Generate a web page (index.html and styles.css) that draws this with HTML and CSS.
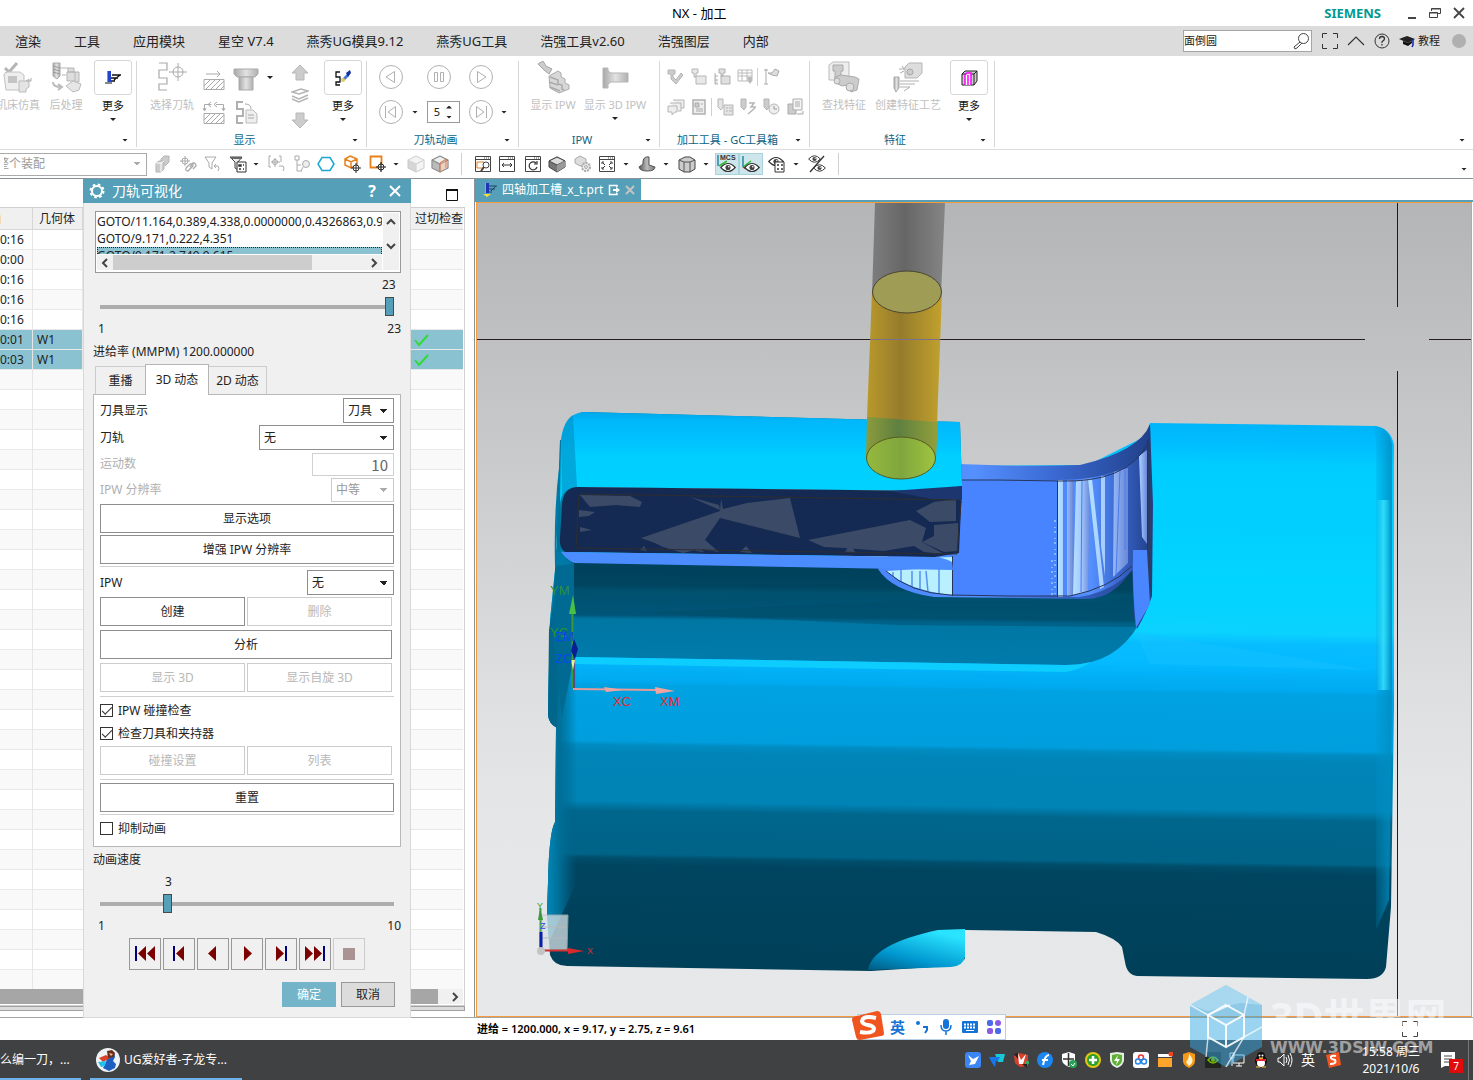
FILE: index.html
```html
<!DOCTYPE html>
<html lang="zh-CN">
<head>
<meta charset="utf-8">
<title>NX - 加工</title>
<link rel="stylesheet" href="styles.css">
</head>
<body>
<svg class="defs" aria-hidden="true">
  <defs>
    <linearGradient id="metal" x1="0" x2="1"><stop offset="0" stop-color="#a8a8a8"/><stop offset=".5" stop-color="#e2e2e2"/><stop offset="1" stop-color="#b0b0b0"/></linearGradient>
    <linearGradient id="dark" x1="0" x2="1"><stop offset="0" stop-color="#555"/><stop offset=".5" stop-color="#bbb"/><stop offset="1" stop-color="#777"/></linearGradient>
    <symbol id="i-eye" viewBox="0 0 20 12"><path d="M1 6q9-10 18 0q-9 10-18 0z" fill="#fff" stroke="#333" stroke-width="1.5"/><circle cx="10" cy="6" r="3.2" fill="#444"/><circle cx="11" cy="5" r="1" fill="#fff"/></symbol>
    <symbol id="i-cube" viewBox="0 0 18 18"><path d="M9 1l8 4v8l-8 4-8-4V5z" fill="#eee" stroke="currentColor" stroke-width="1.2" stroke-linejoin="round"/><path d="M1 5l8 4v8l-8-4z" fill="#999" fill-opacity=".6"/><path d="M1 5l8 4 8-4M9 9v8" fill="none" stroke="currentColor" stroke-width="1.2"/></symbol>
    <symbol id="i-window" viewBox="0 0 18 18"><path d="M1.500 1.500h15v15h-15zM1.500 4.500h15" fill="#fff" stroke="#444"/><path d="M10 3h1M12 3h1M14 3h1" stroke="#444"/></symbol>
    <symbol id="i-hatch" viewBox="0 0 22 11"><path d="M1 .5h20v10H1z" fill="none" stroke="#aaa"/><path d="M1 7l6-6M3 10l9-9M8 10l9-9M13 10l8-8M18 10l3-3" stroke="#aaa"/></symbol>
  </defs>
</svg>

<div class="app">
  <header class="titlebar">
    <h1>NX - 加工</h1>
    <div class="window-controls">
      <strong class="brand">SIEMENS</strong>
      <button aria-label="最小化"><svg width="12" height="14"><path d="M2 12h8" stroke="#444" stroke-width="2"/></svg></button>
      <button aria-label="还原"><svg width="14" height="14"><path d="M3.500 5V2.500h9v5H10M1.500 6.500h8v5h-8zM3 3h10M1 7h9" fill="none" stroke="#444"/></svg></button>
      <button aria-label="关闭"><svg width="14" height="14"><path d="M2 2l10 10M12 2L2 12" stroke="#444" stroke-width="1.800"/></svg></button>
    </div>
  </header>

  <nav class="menubar">
    <a href="#">渲染</a><a href="#">工具</a><a href="#">应用模块</a><a href="#">星空 V7.4</a><a href="#">燕秀UG模具9.12</a><a href="#">燕秀UG工具</a><a href="#">浩强工具v2.60</a><a href="#">浩强图层</a><a href="#">内部</a>
    <div class="menu-tools">
      <label class="search"><input type="text" value="面倒圆" aria-label="命令查找器"><svg width="18" height="18"><circle cx="11.500" cy="6.500" r="5" fill="none" stroke="#444"/><path d="M8 10l-6 5 1 2 2-1 5-5" fill="none" stroke="#444"/></svg></label>
      <button aria-label="全屏"><svg width="18" height="18"><path d="M1.500 6V1.500H6M12 1.500h4.500V6M16.500 12v4.500H12M6 16.500H1.500V12" fill="none" stroke="#333"/></svg></button>
      <button aria-label="折叠"><svg width="18" height="18"><path d="M1 13l8-8 8 8" fill="none" stroke="#333" stroke-width="1.200"/></svg></button>
      <button aria-label="帮助"><svg width="18" height="18"><circle cx="9" cy="9" r="7" fill="none" stroke="#333"/><path d="M6.500 7q0-2.500 2.500-2.500t2.500 2.300q0 1.400-1.500 2T9 11M9 12v1.500" fill="none" stroke="#333" stroke-width="1.300"/></svg></button>
      <a class="tutorial" href="#"><svg width="16" height="14"><path d="M0 5l8-3 8 3-7 4z" fill="#222"/><path d="M4 7v3l5 2 4-3V7l-4 2z" fill="#111"/><path d="M14 5v6l-1 2" fill="none" stroke="#12a" stroke-width="1.500"/></svg>教程</a>
      <span class="dot"></span>
    </div>
  </nav>

  <section class="ribbon" aria-label="功能区">
    <div class="group g-output">
      <div class="group-body">
        <button class="big" disabled><svg width="32" height="32"><path d="M3 7l4 4 8-9" fill="none" stroke="#b5b5b5" stroke-width="3"/><path d="M2 14q0-3 4-3h12l4 3v15H4z" fill="#eee" stroke="#c2c2c2"/><path d="M6 15h9v7H6z" fill="#c4c4c4"/><path d="M17 20h7l3-2v8l-3 2v3h-7z" fill="#e4e4e4" stroke="#bbb"/><path d="M24 20h5v-3" fill="none" stroke="#aaa"/></svg><span>机床仿真</span></button>
        <button class="big" disabled><svg width="32" height="32"><path d="M3 2h7v13l-3 3-4-3z" fill="url(#metal)" stroke="#aaa"/><path d="M3 5l7 2M3 8l7 2M3 11l7 2" stroke="#999"/><path d="M10 7h8M12 14h4M18 7h6v4h-6zM17 11h8v9h-8zM23 11h6v10h-4" fill="#ddd" stroke="#b5b5b5"/><path d="M16 25l7-5 8 3-2 6-6 2z" fill="#e6e6e6" stroke="#bbb"/><path d="M3 21q0 5 8 5M8 23l4 3-4 3" fill="none" stroke="#bbb" stroke-width="2"/></svg><span>后处理</span></button>
        <button class="big more"><i><svg width="18" height="18"><path d="M3 2h4v11H3z" fill="#24c"/><path d="M3 2h1v11H3z" fill="#88e"/><path d="M1 14h7" stroke="#888" stroke-width="2"/><path d="M8 6h9M7 9h7M7 12h4M16 6l-6 5" fill="none" stroke="#111" stroke-width="1.300"/></svg></i><span>更多</span><b class="caret"></b></button>
      </div>
      <footer><span></span><b class="caret"></b></footer>
    </div>
    <div class="group g-show">
      <div class="group-body">
        <button class="big wide" disabled><svg width="32" height="32"><path d="M3 2h8v7H3v8h8v6H3v6h8" fill="none" stroke="#aaa" stroke-width="1.200"/><circle cx="22" cy="11" r="5" fill="none" stroke="#aaa"/><path d="M22 2v18M13 11h18" stroke="#aaa"/></svg><span>选择刀轨</span></button>
        <div class="stack">
          <button disabled aria-label="确认"><svg width="24" height="24"><path d="M4 6h14M15 3l3 3-3 3" fill="none" stroke="#aaa"/><use href="#i-hatch" x="1" y="11" width="22" height="11"/></svg></button>
          <button disabled aria-label="编辑显示"><svg width="24" height="24"><path d="M2.500 9V3.500h7M14 3.500h7.500V9M9 1L6 3.500 9 6M15 1l-3 2.500L15 6M1 7l1.500 3L4 7M20 7l1.500 3L23 7" fill="none" stroke="#aaa"/><use href="#i-hatch" x="1" y="12" width="22" height="11"/></svg></button>
        </div>
        <div class="stack lead">
          <button disabled aria-label="刀具"><svg width="26" height="26"><path d="M1 2h24v5l-3 3H4L1 7z" fill="url(#metal)" stroke="#aaa"/><path d="M6 10h14v13H6z" fill="url(#metal)" stroke="#aaa"/></svg></button>
          <button disabled aria-label="报告"><svg width="26" height="26"><path d="M10 2H4v7h6v7H4v7h6" fill="none" stroke="#b0b0b0" stroke-width="2"/><path d="M13 10h7l4 4v9H13z" fill="#eee" stroke="#bbb"/><path d="M15 15h6M15 18h6M12 4q6 0 6 5" fill="none" stroke="#aaa"/></svg></button>
        </div>
        <b class="caret first-row"></b>
        <div class="stack thirds">
          <button disabled aria-label="上移"><svg width="18" height="18"><path d="M9 1l8 8h-4v7H5V9H1z" fill="#ccc" stroke="#b8b8b8"/></svg></button>
          <button disabled aria-label="图层"><svg width="18" height="18"><path d="M1 5l9-3 7 2-9 3zM1 9l7 3 9-4M1 12l7 3 9-4" fill="none" stroke="#b5b5b5" stroke-width="1.400"/></svg></button>
          <button disabled aria-label="下移"><svg width="18" height="18"><path d="M9 17l8-8h-4V2H5v7H1z" fill="#ccc" stroke="#b8b8b8"/></svg></button>
        </div>
        <button class="big more"><i><svg width="18" height="18"><path d="M6 3H2v5h4v5H2v3h4" fill="none" stroke="#111" stroke-width="1.300"/><path d="M8 10l5-5 2 2-5 5z" fill="#47d"/><path d="M12 4l4-3 1 3-3 4z" fill="#139"/><circle cx="9" cy="11" r="2" fill="#dc6"/></svg></i><span>更多</span><b class="caret"></b></button>
      </div>
      <footer><span>显示</span><b class="caret"></b></footer>
    </div>
    <div class="group g-anim">
      <div class="group-body player">
        <button disabled aria-label="后退"><svg width="24" height="24"><circle cx="12" cy="12" r="11.500"/><path d="M15.500 6.500v11L7 12z"/></svg></button><span></span>
        <button disabled aria-label="暂停"><svg width="24" height="24"><circle cx="12" cy="12" r="11.500"/><path d="M7.500 7.500h3v9h-3zM13.500 7.500h3v9h-3z"/></svg></button>
        <button disabled aria-label="播放"><svg width="24" height="24"><circle cx="12" cy="12" r="11.500"/><path d="M8.500 6.500v11L17 12z"/></svg></button><span></span>
        <button disabled aria-label="上一步"><svg width="24" height="24"><circle cx="12" cy="12" r="11.500"/><path d="M16.500 6.500v11L9 12zM6.500 6v12"/></svg></button><b class="caret"></b>
        <label class="spin"><input type="text" value="5" aria-label="动画速度"><span><b class="caret up"></b><b class="caret"></b></span></label>
        <button disabled aria-label="下一步"><svg width="24" height="24"><circle cx="12" cy="12" r="11.500"/><path d="M7.500 6.500v11L15 12zM17.500 6v12"/></svg></button><b class="caret"></b>
      </div>
      <footer><span>刀轨动画</span><b class="caret"></b></footer>
    </div>
    <div class="group g-ipw">
      <div class="group-body">
        <button class="big wide" disabled><svg width="34" height="32"><path d="M2 3l5-3 3 5 6 3-3 5-5-4z" fill="#ccc" stroke="#a5a5a5"/><path d="M13 15l9-5 3 2v4l4 2v4l4 2v4l-10 4-9-5z" fill="#d8d8d8" stroke="#aaa"/><path d="M14 16l8 3v4l4 1v4l2 1M13 21l9 3M14 26l10 4" fill="none" stroke="#aaa" stroke-width="1.500"/></svg><span>显示 IPW</span></button>
        <button class="big wide" disabled><svg width="34" height="32"><path d="M5 7h5v3l3 2h17v9H13l-3 2v4H5z" fill="url(#metal)" stroke="#b5b5b5"/></svg><span>显示 3D IPW</span><b class="caret"></b></button>
      </div>
      <footer><span>IPW</span><b class="caret"></b></footer>
    </div>
    <div class="group g-gc">
      <div class="group-body rows">
        <div class="row">
          <button disabled aria-label="检查"><svg width="18" height="18"><path d="M1 2h7v4H6v3l3 3 5-7 2 2-7 9-5-5V6H1z" fill="#ccc" stroke="#b5b5b5"/></svg></button>
          <button disabled aria-label="文件夹"><svg width="18" height="18"><path d="M2 1h6v4H6v4H4V5H2zM6 8h10v8H6z" fill="#e8e8e8" stroke="#b5b5b5"/></svg></button>
          <button disabled aria-label="结构"><svg width="18" height="18"><path d="M6 1h6v4h-2v3H8V5H6zM8 8h9v8H8zM2 5v11h3M2 8h3M2 12h3" fill="#e0e0e0" stroke="#b0b0b0"/></svg></button>
          <button disabled aria-label="表格"><svg width="18" height="18"><path d="M2 2h14v11H2zM2 5h14M2 8h14M6 2v11M11 2v11" fill="none" stroke="#bbb"/><path d="M11 9h5v4l-2 3-2-3z" fill="#bbb"/></svg></button>
          <s></s>
          <button disabled aria-label="标记"><svg width="18" height="18"><path d="M3 1v15M1 2h4M1 16h4M5 5h4l3-4 4 2-2 5-5-1z" fill="#ddd" stroke="#aaa"/></svg></button>
        </div>
        <div class="row">
          <button disabled aria-label="窗口"><svg width="18" height="18"><path d="M6 2h11v8h-3M3 5h11v8h-3M1 8h9v6H8l-3 3v-3H1z" fill="#eee" stroke="#b5b5b5"/></svg></button>
          <button disabled aria-label="文档"><svg width="18" height="18"><path d="M3 2h12v14H3z" fill="#eee" stroke="#b0b0b0" stroke-width="1.500"/><path d="M5 5h4v4H5zM11 6h2M6 11h7M6 13h7" fill="#ccc" stroke="#aaa"/></svg></button>
          <s></s>
          <button disabled aria-label="列表"><svg width="18" height="18"><path d="M1 1h5v8l-2 3-3-3zM7 7h9v10H7zM9 10h2M12 10h3M9 13h2M12 13h3" fill="#e4e4e4" stroke="#b5b5b5"/></svg></button>
          <button disabled aria-label="修复"><svg width="18" height="18"><path d="M1 1h5v8l-2 3-3-3z" fill="#ccc" stroke="#b5b5b5"/><path d="M9 5h5l-3 4h5M8 16l7-6" fill="none" stroke="#b5b5b5" stroke-width="1.500"/></svg></button>
          <button disabled aria-label="时间"><svg width="18" height="18"><path d="M1 1h5v8l-2 3-3-3z" fill="#ccc" stroke="#b5b5b5"/><circle cx="11" cy="11" r="5" fill="#eee" stroke="#b5b5b5"/><path d="M11 8v3h3" fill="none" stroke="#999"/></svg></button>
          <button disabled aria-label="清单"><svg width="18" height="18"><path d="M2 6h8v10H2z" fill="#ccc" stroke="#aaa"/><path d="M7 1h9v11H7zM9 4h5M9 6h5M9 8h5M11 16h6v-3" fill="#f4f4f4" stroke="#aaa"/></svg></button>
        </div>
      </div>
      <footer><span>加工工具 - GC工具箱</span><b class="caret"></b></footer>
    </div>
    <div class="group g-feature">
      <div class="group-body">
        <button class="big" disabled><svg width="34" height="32"><path d="M2 4l4-3h16v14l-4 4H2z" fill="#eee" stroke="#bbb"/><path d="M6 4h10v6h-2v8H8v-8H6z" fill="#ccc" stroke="#aaa"/><path d="M8 16l6-2 14 2 4 2-2 11-6 2-4-7-5 1-6-3z" fill="#ccc" stroke="#aaa"/><circle cx="23" cy="26" r="4" fill="#ddd" stroke="#aaa"/><circle cx="10" cy="20" r="3" fill="#ddd" stroke="#aaa"/></svg><span>查找特征</span></button>
        <button class="big xwide" disabled><svg width="34" height="32"><path d="M14 6l4-4h13v10l-5 5H14z" fill="#ddd" stroke="#b5b5b5"/><circle cx="19" cy="11" r="3" fill="#ccc" stroke="#aaa"/><path d="M8 8h6M11 5l2 3M9 12l4-2" stroke="#aaa"/><path d="M3 16h5v11l-3 4-2-4z" fill="url(#metal)" stroke="#aaa"/><path d="M9 20h19M9 23h15M9 26h10l-6 4" fill="none" stroke="#b0b0b0"/></svg><span>创建特征工艺</span></button>
        <button class="big more"><i><svg width="18" height="18"><path d="M2 5l3-3h12v10l-3 4H2z" fill="#ccc" stroke="#222"/><path d="M2 5h12v11M14 5l3-3" fill="none" stroke="#222"/><path d="M5 16V6l2-2h4v12M8 6v10" fill="#fff" stroke="#f0f" stroke-width="1.500"/></svg></i><span>更多</span><b class="caret"></b></button>
      </div>
      <footer><span>特征</span><b class="caret"></b></footer>
    </div>
    <div class="group g-rest"><footer><span></span><b class="caret"></b></footer></div>
  </section>

  <section class="selbar" aria-label="选择条">
    <select disabled aria-label="选择范围"><option>整个装配</option></select>
    <div class="tools tight">
      <div><button disabled aria-label="组件"><svg width="18" height="18"><path d="M3 8l3-2h5v8l-3 3H3zM8 6V4l3-3h5v6l-4 4" fill="#ccc" stroke="#b5b5b5"/><path d="M3 8h5v9M8 8l3-2" fill="none" stroke="#fff"/></svg></button></div>
      <div><button disabled aria-label="关联"><svg width="18" height="18"><path d="M6 1v10M1 6h10" stroke="#aaa"/><circle cx="6" cy="6" r="3" fill="none" stroke="#aaa"/><path d="M7 13l4-4q3-1 3 2l-5 5q-3 0-2-3zM11 12l3-4q3 0 3 3l-3 3" fill="none" stroke="#aaa" stroke-width="1.300"/></svg></button><button disabled aria-label="重置过滤器"><svg width="18" height="18"><path d="M2 2h11L9 8v6l-3-2V8z" fill="none" stroke="#aaa"/><path d="M11 11h4q2 2 0 5M13 9l-2 2 2 2" fill="none" stroke="#aaa"/></svg></button></div>
      <div><button aria-label="过滤器"><svg width="18" height="18"><path d="M1 2h12L9 7v8l-3-2V7z" fill="#eee" stroke="#444"/><path d="M1 2h12v2H2z" fill="#666"/><path d="M8 7h9v10H8z" fill="#fff" stroke="#333"/><path d="M10 10h2v1h-2zM10 14h2M14 10h1M14 14h1" stroke="#333" stroke-width="1.500"/></svg></button><b class="caret"></b></div>
      <div><button disabled aria-label="捕捉"><svg width="18" height="18"><path d="M4 1H2v11h2M12 1h2v6M8 3v9M4 7h9" fill="none" stroke="#aaa"/><circle cx="8" cy="7" r="2.500" fill="none" stroke="#aaa"/><path d="M12 11h4q2 2 0 5" fill="none" stroke="#aaa"/></svg></button></div>
      <div><button disabled aria-label="结构"><svg width="18" height="18"><path d="M2 1h4v4H2zM4 5v11h5M4 10h4" fill="none" stroke="#aaa"/><circle cx="13" cy="9" r="3.500" fill="#eee" stroke="#aaa"/><path d="M10 12l-2 4" stroke="#aaa"/></svg></button><button aria-label="多边形"><svg width="18" height="18"><path d="M5 2.500h8l4 6.500-4 6.500H5L1 9z" fill="none" stroke="#1aa7d4" stroke-width="1.500"/></svg></button></div>
      <div><button aria-label="选择体"><svg width="18" height="18"><path d="M7 1l7 3v6l-6 3-6-3V4zM2 4l6 3 6-3M8 7v6" fill="none" stroke="#e8811a" stroke-width="1.500"/><circle cx="13" cy="13" r="3" fill="#fff" stroke="#333"/><path d="M13 8v10M8 13h10" stroke="#333"/></svg></button></div>
      <div><button aria-label="矩形选择"><svg width="18" height="18"><path d="M1.500 1.500h11v11h-11z" fill="none" stroke="#e8811a" stroke-width="1.800"/><circle cx="12" cy="12" r="3" fill="#fff" stroke="#222"/><path d="M12 7v10M7 12h10" stroke="#222" stroke-width="1.200"/></svg></button><b class="caret"></b></div>
      <div><button disabled aria-label="立方体" class="faint"><svg width="18" height="18"><use href="#i-cube" width="18" height="18"/></svg></button><button aria-label="着色"><svg width="18" height="18" color="#888"><use href="#i-cube" width="18" height="18"/><path d="M9 17V8l6-4v9" fill="#e8b49a" fill-opacity=".5" stroke="#d87848"/></svg></button></div>
    </div>
    <s></s>
    <div class="tools">
      <div><button aria-label="窗口缩放"><svg width="18" height="18"><use href="#i-window" width="18" height="18"/><path d="M3 7h7v6H3z" fill="none" stroke="#e8811a"/><circle cx="12" cy="10" r="3" fill="#fff" stroke="#444"/><path d="M10 12l-3 4" stroke="#444" stroke-width="2"/></svg></button><button aria-label="平移"><svg width="18" height="18"><use href="#i-window" width="18" height="18"/><path d="M4 10h10M6 8l-2 2 2 2M12 8l2 2-2 2" fill="none" stroke="#333"/></svg></button></div>
      <div><button aria-label="旋转"><svg width="18" height="18"><use href="#i-window" width="18" height="18"/><path d="M12 8a4 4 0 1 0 1 4M13 6v3h-3" fill="none" stroke="#333" stroke-width="1.200"/></svg></button><button aria-label="视图"><svg width="18" height="18"><path d="M9 2l8 4v6l-8 5-8-5V6z" fill="#777" stroke="#444"/><path d="M9 2l8 4-8 4-8-4z" fill="#ddd" stroke="#444"/><path d="M9 10v7l8-5V6z" fill="#999"/></svg></button></div>
      <div><button disabled aria-label="设置"><svg width="18" height="18"><path d="M6 1l6 3v4l-6 3-5-3V4z" fill="#ddd" stroke="#aaa"/><circle cx="12" cy="12" r="4" fill="#eee" stroke="#aaa" stroke-width="2" stroke-dasharray="2 1"/><circle cx="12" cy="12" r="1.500" fill="none" stroke="#aaa"/></svg></button><button aria-label="适合窗口"><svg width="18" height="18"><use href="#i-window" width="18" height="18"/><path d="M4 9V7h2M12 7h2v2M14 12v2h-2M6 14H4v-2M5 8l2 2M13 8l-2 2M5 13l2-2M13 13l-2-2" fill="none" stroke="#333"/></svg></button><b class="caret"></b></div>
      <div><button aria-label="截面"><svg width="18" height="18"><path d="M1 12l4-3V6q1-5 6-4v8l6 2q0 4-8 4-7 0-8-4z" fill="url(#dark)" stroke="#555"/></svg></button><b class="caret"></b></div>
      <div><button aria-label="渲染样式"><svg width="18" height="18"><path d="M1 5l6-3h5l5 3v9l-5 3H6l-5-3z" fill="#ccc" stroke="#444"/><path d="M1 5l5 2h6l5-2M6 7v10M12 7v10" fill="none" stroke="#555"/></svg></button><b class="caret"></b></div>
      <div><button class="on" aria-label="显示 MCS"><svg width="20" height="20"><text x="3" y="6" class="mcs">MCS</text><path d="M1 1v11" stroke="#28a" stroke-width="1.500"/><path d="M2 12l8-5" stroke="#3b3" stroke-width="1.500"/><use href="#i-eye" x="3" y="8" width="16" height="11"/></svg></button><button class="on" aria-label="显示坐标系"><svg width="20" height="20"><path d="M2 2v11" stroke="#28a" stroke-width="1.500"/><path d="M2 13l8-6" stroke="#3b3" stroke-width="1.500"/><path d="M2 13l3 2" stroke="#d22" stroke-width="1.500"/><use href="#i-eye" x="3" y="8" width="16" height="11"/></svg></button></div>
      <div><button aria-label="显示列表"><svg width="18" height="18"><use href="#i-eye" x="0" y="1" width="16" height="11"/><path d="M7 7h9v10H7z" fill="#fff" stroke="#333"/><path d="M9 10h2M9 14h2M13 10h2M13 14h2" stroke="#333" stroke-width="1.500"/></svg></button><b class="caret"></b></div>
      <div><button aria-label="反转显示"><svg width="18" height="18"><use href="#i-eye" x="0" y="0" width="13" height="8"/><use href="#i-eye" x="5" y="9" width="13" height="8"/><path d="M16 1L2 17" stroke="#333" stroke-width="1.300"/></svg></button></div>
    </div>
    <s></s>
    <b class="caret end"></b>
  </section>

  <main class="workspace">
    <section class="navigator" aria-label="工序导航器">
      <div class="nav-top"><svg width="12" height="12"><path d="M.5 1h11v10.500H.5z" fill="#fff" stroke="#111"/><path d="M0 1h12" stroke="#111" stroke-width="2"/></svg></div>
      <div class="nav-frame">
        <table>
          <thead><tr><th class="c-time"><span class="clip">间</span></th><th class="c-geo">几何体</th><th></th><th class="c-check">过切检查</th></tr></thead>
          <tbody>
            <tr><td>0:16</td><td></td><td></td><td></td></tr>
            <tr><td>0:00</td><td></td><td></td><td></td></tr>
            <tr><td>0:16</td><td></td><td></td><td></td></tr>
            <tr><td>0:16</td><td></td><td></td><td></td></tr>
            <tr><td>0:16</td><td></td><td></td><td></td></tr>
            <tr class="sel"><td>0:01</td><td>W1</td><td></td><td><svg width="16" height="14"><path d="M1 7l4 5 9-10" fill="none" stroke="#2fdc35" stroke-width="2"/></svg></td></tr>
            <tr class="sel"><td>0:03</td><td>W1</td><td></td><td><svg width="16" height="14"><path d="M1 7l4 5 9-10" fill="none" stroke="#2fdc35" stroke-width="2"/></svg></td></tr>
          </tbody>
        </table>
        <div class="empty-rows"></div>
        <div class="hscroll nav-scroll"><span></span><svg width="16" height="15"><path d="M6 4l4 4-4 4" fill="none" stroke="#444" stroke-width="2"/></svg></div>
      </div>
      <div class="splitter"></div>
    </section>

    <section class="view">
      <div class="tabs-row">
        <a class="part-tab" href="#"><svg width="16" height="16"><path d="M4 1h4v10H4z" fill="#23b"/><path d="M4 1h1v10H4z" fill="#99f"/><path d="M2 12h8l-4 3z" fill="#fd3"/><path d="M8 4h8M8 7h6M8 10h3M15 4l-5 5" fill="none" stroke="#246"/></svg>四轴加工槽_x_t.prt<svg width="12" height="12"><path d="M9 3V1.500H1.500v9H9V9" fill="none" stroke="#fff" stroke-width="1.500"/><path d="M5 5h3V3l4 3-4 3V7H5z" fill="#fff"/></svg><svg width="10" height="10"><path d="M1 1l8 8M9 1L1 9" stroke="#c4c4c4" stroke-width="2"/></svg></a>
      </div>
      <svg class="scene" viewBox="477 203 994 813" preserveAspectRatio="xMidYMid slice" role="img" aria-label="零件三维视图">
        <defs>
          <linearGradient id="bg" x1="0" y1="0" x2="0" y2="1"><stop offset="0" stop-color="#b4b5b6"/><stop offset=".3" stop-color="#c8c9ca"/><stop offset=".6" stop-color="#dedfe0"/><stop offset=".75" stop-color="#e5e6e8"/><stop offset="1" stop-color="#e6e8ea"/></linearGradient>
          <linearGradient id="body" gradientUnits="userSpaceOnUse" x1="976" y1="423" x2="968" y2="980">
            <stop offset="0" stop-color="#00b6fb"/><stop offset=".035" stop-color="#00bfff"/><stop offset=".07" stop-color="#00cdff"/><stop offset=".3" stop-color="#02d4ff"/><stop offset=".37" stop-color="#0bd2ff"/><stop offset=".39" stop-color="#07bdff"/><stop offset=".43" stop-color="#04b9ff"/><stop offset=".45" stop-color="#02b0f6"/><stop offset=".472" stop-color="#00aaf0"/><stop offset=".48" stop-color="#00a2e2"/><stop offset=".58" stop-color="#009edd"/><stop offset=".587" stop-color="#008cc2"/><stop offset=".6" stop-color="#0085b8"/><stop offset=".688" stop-color="#0083b5"/><stop offset=".706" stop-color="#00668c"/><stop offset=".783" stop-color="#006388"/><stop offset=".79" stop-color="#004e6b"/><stop offset=".803" stop-color="#004560"/><stop offset="1" stop-color="#003f58"/>
          </linearGradient>
          <linearGradient id="top" x1="0" y1="0" x2="0" y2="1"><stop offset="0" stop-color="#00a8ea"/><stop offset=".1" stop-color="#00b8fb"/><stop offset=".3" stop-color="#00c2ff"/><stop offset=".45" stop-color="#00ceff"/><stop offset="1" stop-color="#00d4ff"/></linearGradient>
          <linearGradient id="recess" gradientUnits="userSpaceOnUse" x1="850" y1="563" x2="849" y2="662"><stop offset="0" stop-color="#00405a"/><stop offset=".25" stop-color="#004560"/><stop offset=".3" stop-color="#00506e"/><stop offset=".55" stop-color="#005578"/><stop offset=".59" stop-color="#0076a3"/><stop offset="1" stop-color="#007bab"/></linearGradient>
          <linearGradient id="edgeL"><stop offset="0" stop-color="#0088b8"/><stop offset=".4" stop-color="#006f98"/><stop offset="1" stop-color="#006288" stop-opacity="0"/></linearGradient>
          <linearGradient id="edgeR"><stop offset="0" stop-color="#0094cc" stop-opacity="0"/><stop offset="1" stop-color="#008cc0" stop-opacity=".85"/></linearGradient>
          <linearGradient id="glow"><stop offset="0" stop-color="#3ae6ff" stop-opacity="0"/><stop offset=".5" stop-color="#3ae6ff" stop-opacity=".8"/><stop offset="1" stop-color="#3ae6ff" stop-opacity="0"/></linearGradient>
          <linearGradient id="wall"><stop offset="0" stop-color="#4a86ff"/><stop offset=".35" stop-color="#5590ff"/><stop offset=".65" stop-color="#3a68d0"/><stop offset="1" stop-color="#203f88"/></linearGradient>
          <linearGradient id="pale"><stop offset="0" stop-color="#b4e2ff"/><stop offset=".5" stop-color="#a4c8ff"/><stop offset="1" stop-color="#6888d8"/></linearGradient>
          <linearGradient id="shank"><stop offset="0" stop-color="#7d7d7d"/><stop offset=".45" stop-color="#666"/><stop offset="1" stop-color="#858585"/></linearGradient>
          <linearGradient id="flute"><stop offset="0" stop-color="#b9982b"/><stop offset=".45" stop-color="#957c2c"/><stop offset="1" stop-color="#c2a12d"/></linearGradient>
          <linearGradient id="flute2"><stop offset="0" stop-color="#8c9b3c"/><stop offset=".45" stop-color="#5e8040"/><stop offset="1" stop-color="#949f3a"/></linearGradient>
          <linearGradient id="tip"><stop offset="0" stop-color="#96b83e"/><stop offset=".5" stop-color="#7fa63e"/><stop offset="1" stop-color="#a0c43e"/></linearGradient>
          <linearGradient id="foot" x1="0" y1="1" x2=".6" y2="0"><stop offset="0" stop-color="#005b80"/><stop offset=".4" stop-color="#0097d0"/><stop offset="1" stop-color="#2ae4ff"/></linearGradient>
        </defs>
        <path d="M477 203h994v813H477z" fill="url(#bg)"/>
        <path d="M477 339.500h888M1429 339.500h42" stroke="#2b1c22"/>
        <path d="M1397.500 203v104M1397.500 371v645" stroke="#1c1c1c"/>
        <!-- turned body -->
        <path d="M560 440l-4 120-6 60-2 95q1 9 8 12l-1 95q-6 10-7 60l-1 30 3 43q4 11 17 11l304 5 62-4q19-1 32-8v-29l131 2q20 6 26 15l3 15q2 13 12 14l230 3q16 0 19-12l5-60 3-200V445q-3-16-18-19l-226-3-2 12-60 30-128 1v109l-360-60z" fill="url(#body)"/>
        <path d="M560 440l-4 120-6 60-2 95q1 9 8 12l-1 95q-6 10-7 60l-1 30 2 30 28-60V440z" fill="url(#edgeL)"/>
        <path d="M554 600l-5 30-1 85q1 9 9 13l3-100z" fill="#00668c"/>
        <path d="M1372 427l4-1q14 3 16 19v255l-3 200-13 30V440z" fill="url(#edgeR)"/>
        <path d="M1376 500h14l1 190h-15z" fill="url(#glow)"/>
        <path d="M1135 632l235 38-220-6z" fill="#18c2ff" opacity=".4"/>
        <!-- recessed groove -->
        <path d="M574 560l320 8 240-10 5 66q-24 42-74 41l-491-8-14-30z" fill="url(#recess)"/>
        <path d="M556 556l18 4v97l-12 60-10-90z" fill="#006a92"/>
        <path d="M640 613l260-12h170q40 4 66-8l1 34-240-2z" fill="#004b68" opacity=".45"/>
        <path d="M574 657l491 8q14 0 26-3-12 8-26 10l-491-8z" fill="#10d2ff" opacity=".8"/>
        <!-- slot walls -->
        <path d="M878 569l80-105q70 3 122 1 60-14 70-41l3 80-1 92q-6 18-15 33l-3-12-2-48q-18 30-46 30l-152-2q-42-6-56-28z" fill="url(#wall)"/>
        <path d="M950 480h108v116H950z" fill="#4884ff"/>
        <path d="M886 571q24 20 66 24v-38l-24 1 6 10z" fill="#b8f0ff"/>
        <path d="M893 572v6M901 570v13M912 571v17M920 571v19M926 571l2 21M939 556v38" stroke="#5590f0" stroke-width="1.500"/>
        <path d="M1058 480q70 0 92-36l1 100q-24 46-72 53h-21z" fill="url(#wall)"/>
        <g fill="url(#pale)"><path d="M1058 480h5v117h-5zM1067 480h6v116h-6z"/><path d="M1076 481l14-3-2 114-15 3z"/><path d="M1092 479l12 108-4 2-12-110zM1101 476h4v100l-4-30zM1114 472l14-4v95l-15 14z"/><path d="M1133 460v110M1139 456l8-6v94l-5-7z"/></g>
        <path d="M1082 480l-1 112M1120 470l-4 106M1125 470v80" stroke="#4a7bec"/>
        <path d="M1150 425l-3 30v140l5-2z" fill="#2b3c68"/>
        <path d="M1133 550h14l3 54-14 24q-4-40-3-78z" fill="#4a86ff"/>
        <path d="M962 480h34l64 1q66 2 87-36M950 595l60 1h60q40-8 62-30M886 571q24 22 64 24M1057.500 481v116M952.500 556v40M1147.500 440v108" fill="none" stroke="#26355c"/>
        <path d="M1055 520v76M1052 560v36" stroke="#9cc8ff" stroke-width="1.500" stroke-dasharray="2 5 1 3"/>
        <!-- upper block -->
        <path d="M566 425q4-10 17-13l377 10 2 64-22 5-362-4-18 2-4 60 16 15-17 2q-2-80 11-141z" fill="#0079a6"/>
        <path d="M561 440q3-26 22-28l377 10 2 64-22 5-362-4q-18 0-18 20z" fill="url(#top)"/>
        <path d="M561 440q3-20 12-25l4 72q-14 2-15 14z" fill="#0090c4" opacity=".6"/>
        <path d="M562 505q1-18 16-18l362 4 22-5-3 67-24 4-370-5q-6-4-5-14z" fill="#152a52"/>
        <path d="M890 491l72-5v14l-30-1z" fill="#1d3670"/>
        <g fill="#3b4a66"><path d="M580 495l50 1 12 6-2 5-24-2-26 2zM579 510l16 2-6 4-10 1zM580 527l12 3-12 2z"/><path d="M641 538l79-27 1-12 2 10 24-6 43-5 10 40-80-20-15 22 14 12-20-3-16 4-20-6-8-4z"/><path d="M690 497l30 13-1-5zM700 497l20 10zM808 540l102-20 16 8-4 14 22 12-20-2-10-6-30 5-40-3-20-1z"/><path d="M916 511l18-9 22-3v22l-26 1zM934 525l24-2v28l-14 1-22-10 12-6z"/><path d="M640 550l4-4 3 5zM695 551l4-5 5 6zM740 552l6-6 6 7zM845 552l5-8 6 9z"/></g>
        <path d="M579 494l379 6M577 548l380 6M579 494l-3 54M961 501l-4 53" fill="none" stroke="#2e2e30"/>
        <path d="M561 552l370 5q12 0 21 5l1 8-378-7q-6-1-14-11z" fill="#4b8cff"/>
        <!-- bottom boss -->
        <path d="M868 970q4-26 70-40l27-1v28q-2 9-14 10z" fill="url(#foot)"/>
        <!-- cutter -->
        <path d="M875 203h70l-4 92h-69z" fill="url(#shank)"/>
        <path d="M872 292h70l-5 133-70-7z" fill="url(#flute)"/>
        <path d="M867 417l71 5-2 36h-70z" fill="url(#flute2)"/>
        <path d="M870 339.500h70" stroke="#7c7090"/>
        <ellipse cx="907" cy="292" rx="34.500" ry="21" fill="#9f9c55" stroke="#4a4630"/>
        <ellipse cx="901" cy="458" rx="34.500" ry="21" fill="url(#tip)" stroke="#5a5a20"/>
        <!-- coordinate systems -->
        <path d="M572.500 688v-78" stroke="#3a9b3c" stroke-width="2"/><path d="M569 614l4-19 3 19z" fill="#48c048"/>
        <path d="M574 688v-34" stroke="#5a4a90" stroke-width="2"/><path d="M571 651l3-12 4 10-3 10z" fill="#0b1e98"/><path d="M571 660h4l-2 10z" fill="#e8f09a"/>
        <path d="M573 689l84 1" stroke="#e79a98" stroke-width="2"/><path d="M604 687l20 3-18 2zM655 687l20 4-19 3z" fill="#f0a3a0"/>
        <g class="axis"><text x="550" y="595" fill="#2b9334">YM</text><text x="550" y="637" fill="#2b9334">YC</text><text x="555" y="641" fill="#0a48f0">ZM</text><text x="555" y="663" fill="#0a48f0">ZC</text><text x="613" y="706" fill="#e02c2c">XC</text><text x="660" y="706" fill="#e02c2c">XM</text></g>
        <path d="M542 915h26l-1 35h-25z" fill="#d8e0e4" opacity=".75" stroke="#bbb"/><path d="M542 927h25M542 938h25" stroke="#b5b9bb"/>
        <path d="M540.500 950v-42" stroke="#4aa34c" stroke-width="2"/><path d="M538 920l2-12 3 12z" fill="#3a9a3c"/><path d="M541 950v-18" stroke="#0a1fa8" stroke-width="3"/>
        <path d="M541 950.500h30" stroke="#d63030" stroke-width="2"/><path d="M568 948l16 3-16 3z" fill="#d82a2a"/><circle cx="541" cy="951" r="4" fill="#c4c4c4"/>
        <g class="axis small"><text x="537" y="909" fill="#3aa33c">Y</text><text x="540" y="929" fill="#2450e8">Z</text><text x="587" y="954" fill="#d83030">X</text></g>
      </svg>
    </section>

    <section class="dialog" role="dialog" aria-label="刀轨可视化">
      <header><svg width="16" height="16"><circle cx="8" cy="8" r="5" fill="none" stroke="#fff" stroke-width="2"/><circle cx="8" cy="8" r="6.500" fill="none" stroke="#fff" stroke-width="2" stroke-dasharray="2.600 2.500"/></svg><h2>刀轨可视化</h2><button aria-label="帮助" class="help">?</button><button aria-label="关闭"><svg width="14" height="14"><path d="M2 2l10 10M12 2L2 12" stroke="#fff" stroke-width="2"/></svg></button></header>
      <div class="dialog-body">
        <div class="listbox">
          <ul><li>GOTO/11.164,0.389,4.338,0.0000000,0.4326863,0.9015</li><li>GOTO/9.171,0.222,4.351</li><li class="sel">GOTO/9.171,2.749,9.615</li></ul>
          <div class="vscroll"><svg width="10" height="8"><path d="M1 6l4-4 4 4" fill="none" stroke="#444" stroke-width="2"/></svg><svg width="10" height="8"><path d="M1 2l4 4 4-4" fill="none" stroke="#444" stroke-width="2"/></svg></div>
          <div class="hscroll"><svg width="16" height="15"><path d="M10 4L6 8l4 4" fill="none" stroke="#444" stroke-width="2"/></svg><span></span><svg width="16" height="15"><path d="M6 4l4 4-4 4" fill="none" stroke="#444" stroke-width="2"/></svg></div>
        </div>
        <div class="slider"><output style="margin-left:282px">23</output><input type="range" min="1" max="23" value="23" aria-label="刀轨位置"><div class="ends"><span>1</span><span>23</span></div></div>
        <p class="feed">进给率 (MMPM) 1200.000000</p>
        <div class="tabs" role="tablist"><button role="tab">重播</button><button role="tab" class="active">3D 动态</button><button role="tab">2D 动态</button></div>
        <div class="panel">
          <div class="field"><label for="f1">刀具显示</label><select id="f1" class="s1"><option>刀具</option></select></div>
          <div class="field"><label for="f2">刀轨</label><select id="f2" class="s2"><option>无</option></select></div>
          <div class="field low"><label for="f3" class="off">运动数</label><input id="f3" class="num" type="text" value="10" disabled></div>
          <div class="field low"><label for="f4" class="off">IPW 分辨率</label><select id="f4" class="s3" disabled><option>中等</option></select></div>
          <button class="btn">显示选项</button>
          <button class="btn">增强 IPW 分辨率</button>
          <hr>
          <div class="field"><label for="f5">IPW</label><select id="f5" class="s4"><option>无</option></select></div>
          <div class="pair"><button class="btn">创建</button><button class="btn" disabled>删除</button></div>
          <div class="pair"><button class="btn">分析</button></div>
          <div class="pair"><button class="btn" disabled>显示 3D</button><button class="btn" disabled>显示自旋 3D</button></div>
          <hr>
          <label class="check"><input type="checkbox" checked>IPW 碰撞检查</label>
          <label class="check"><input type="checkbox" checked>检查刀具和夹持器</label>
          <div class="pair"><button class="btn" disabled>碰撞设置</button><button class="btn" disabled>列表</button></div>
          <hr>
          <button class="btn">重置</button>
          <hr>
          <label class="check"><input type="checkbox">抑制动画</label>
        </div>
        <label class="speed" for="speed">动画速度</label>
        <div class="slider"><output style="margin-left:65px">3</output><input id="speed" type="range" min="1" max="10" value="3"><div class="ends"><span>1</span><span>10</span></div></div>
        <div class="transport">
          <button aria-label="到开头"><svg width="22" height="16"><path d="M2 0v15" stroke="#00007b" stroke-width="2"/><path d="M12 0v15L4 7.500zM21 0v15l-8-7.500z"/></svg></button>
          <button aria-label="上一条"><svg width="22" height="16"><path d="M6 0v15" stroke="#00007b" stroke-width="2"/><path d="M16 0v15L8 7.500z"/></svg></button>
          <button aria-label="反向播放"><svg width="22" height="16"><path d="M14 0v15L6 7.500z"/></svg></button>
          <button aria-label="播放"><svg width="22" height="16"><path d="M8 0v15l8-7.500z"/></svg></button>
          <button aria-label="下一条"><svg width="22" height="16"><path d="M16 0v15" stroke="#00007b" stroke-width="2"/><path d="M6 0v15l8-7.500z"/></svg></button>
          <button aria-label="到结尾"><svg width="22" height="16"><path d="M20 0v15" stroke="#00007b" stroke-width="2"/><path d="M1 0v15l8-7.500zM10 0v15l8-7.500z"/></svg></button>
          <button aria-label="停止" disabled><svg width="22" height="16"><path d="M5 2h12v12H5z" fill="#ab9393"/></svg></button>
        </div>
        <div class="actions"><button class="ok">确定</button><button>取消</button></div>
      </div>
    </section>
  </main>

  <footer class="status"><span>进给 = 1200.000, x = 9.17, y = 2.75, z = 9.61</span><svg width="18" height="18"><path d="M1.500 6V1.500H6M12 1.500h4.500V6M16.500 12v4.500H12M6 16.500H1.500V12" fill="none" stroke="#444"/></svg></footer>

  <footer class="taskbar">
    <a href="#" class="task t1">么编一刀，...</a>
    <a href="#" class="task t2"><svg width="24" height="24"><circle cx="12" cy="12" r="12" fill="#eef2f4"/><path d="M12 7l6-3 1 5-2 4 3 3-1 4-6 3-6-3 3-6z" fill="#1b5fc0"/><path d="M3 10l7-3 4 3-7 4z" fill="#d9402a"/><path d="M11 3l5-1 3 3-1 4-6 1z" fill="#6b2d1c"/><path d="M13 5l4 1-2 2z" fill="#f0b890"/><path d="M2 14l8-1-1 5-4 1z" fill="#27c0ea"/></svg>UG爱好者-子龙专...</a>
    <div class="tray">
      <svg viewBox="0 0 16 16"><rect width="16" height="16" rx="3" fill="#3d84f5"/><path d="M3 3l5 4 6-3-4 8-6 1 2-4z" fill="#fff"/></svg>
      <svg viewBox="0 0 16 16"><path d="M6 2h10l-2 8H9z" fill="#18c8d8"/><path d="M0 5h11l-2 4H7l-1 6-3-4z" fill="#1677e8"/></svg>
      <svg viewBox="0 0 16 16"><path d="M1 4l5-3 9 2v11l-8 1-5-4z" fill="#d9402a"/><path d="M5 1l3 7 5-6-3 10H6z" fill="#fff"/><path d="M1 2l4-1v6zM9 12h5v4z" fill="#222"/><path d="M12 9h4v3h-4z" fill="#3a6"/></svg>
      <svg viewBox="0 0 16 16"><circle cx="8" cy="8" r="8" fill="#1d86f0"/><path d="M12 3Q8 3 6 13M5 8h6" fill="none" stroke="#fff" stroke-width="2"/></svg>
      <svg viewBox="0 0 16 16"><path d="M1 2l7-2 6 2v6q0 5-6 7-7-3-7-7z" fill="#fff"/><path d="M7.500 1v13M2 7h11" stroke="#333" stroke-width="1.500"/><circle cx="12" cy="12" r="4" fill="#27a353"/><path d="M10 12l2 2 2-3" fill="none" stroke="#fff"/></svg>
      <svg viewBox="0 0 16 16"><circle cx="8" cy="8" r="8" fill="#e5c515"/><circle cx="8" cy="8" r="6" fill="#2ba02f"/><path d="M8 4v8M4 8h8" stroke="#fff" stroke-width="2.500"/></svg>
      <svg viewBox="0 0 16 16"><path d="M1 1l7-1 7 1v7q0 5-7 8-7-3-7-8z" fill="#e6efe4"/><path d="M3 3l5-1 5 1v5q0 4-5 6-5-2-5-6z" fill="#5fae35"/><path d="M9 3L5 9h3l-1 4 4-6H8z" fill="#fff"/></svg>
      <svg viewBox="0 0 16 16"><rect width="16" height="16" rx="3" fill="#fff"/><circle cx="8" cy="5.500" r="2.500" fill="none" stroke="#e33" stroke-width="1.500"/><circle cx="5" cy="9.500" r="2.500" fill="none" stroke="#28e" stroke-width="1.500"/><circle cx="11" cy="9.500" r="2.500" fill="none" stroke="#28e" stroke-width="1.500"/></svg>
      <svg viewBox="0 0 16 16"><path d="M1 6h14v9H1z" fill="#ffa42b"/><path d="M1 2h14v3H1z" fill="#fff"/><circle cx="14" cy="2" r="2.500" fill="#f2471e"/></svg>
      <svg viewBox="0 0 16 16"><path d="M2 2l6-2 6 2v7q0 4-6 7-6-3-6-7z" fill="#f59a18"/><path d="M8 2q5 5 3 9l-3 3-3-4q3-3 3-8z" fill="#fff3cc"/></svg>
      <svg viewBox="0 0 16 16"><path d="M0 0h16v16H0z" fill="#20241e"/><path d="M3 8q5-6 10 0-5 6-10 0z" fill="none" stroke="#76b900" stroke-width="1.500"/><circle cx="8" cy="8" r="2" fill="#76b900"/></svg>
      <svg viewBox="0 0 16 16"><path d="M4 3h11v8H4zM7 14h6M10 11v3M1 1h4v5H1zM3 6v8" fill="none" stroke="#fff"/></svg>
      <svg viewBox="0 0 16 16"><ellipse cx="8" cy="9" rx="6" ry="6" fill="#111"/><circle cx="8" cy="4" r="4" fill="#111"/><ellipse cx="8" cy="11" rx="4" ry="4" fill="#fff"/><path d="M3 7h10v2H3z" fill="#e3222a"/><circle cx="6.500" cy="3.500" r="1" fill="#fff"/><circle cx="9.500" cy="3.500" r="1" fill="#fff"/><path d="M6 6h4l-2 1zM3 15h4M9 15h4" fill="#fb3" stroke="#fb3"/></svg>
      <svg viewBox="0 0 16 16"><path d="M1 6h2l4-4v12l-4-4H1zM9 5q2 3 0 6M11 3q3 5 0 10M13 1q4 7 0 14" fill="none" stroke="#fff"/></svg>
      <span>英</span>
      <svg viewBox="0 0 16 16"><path d="M1 3l13-3 2 13-12 3z" fill="#f2541f"/><path d="M11 4Q5 3 6 6q0 1 4 2 2 4-5 4" fill="none" stroke="#fff" stroke-width="2"/></svg>
    </div>
    <time>15:58 周三<br>2021/10/6</time>
    <div class="notice"><svg width="18" height="18"><path d="M1 1h14v14H5l-4 2z" fill="#fff"/><path d="M4 5h8M4 8h8M4 11h5" stroke="#444"/></svg><b>7</b></div>
  </footer>

  <aside class="ime" aria-label="输入法">
    <svg width="32" height="30"><path d="M1 7l24-6q3 0 4 3l3 19q0 3-3 3L8 30q-3 0-4-3L0 10q0-2 1-3z" fill="#f0541f"/><path d="M24 8q-13-3-14 3 0 3 6 4t6 4q-1 5-14 3" fill="none" stroke="#fff" stroke-width="4"/></svg>
    <b>英</b>
    <svg width="16" height="16"><circle cx="4" cy="4" r="2" fill="#1573d8"/><path d="M9 8h4v3l-2 3" fill="none" stroke="#1573d8" stroke-width="2"/></svg>
    <svg width="16" height="16"><rect x="5" y="0" width="6" height="10" rx="3" fill="#1573d8"/><path d="M3 6q0 6 5 6t5-6M8 12v4" fill="none" stroke="#1573d8" stroke-width="1.500"/></svg>
    <svg width="16" height="16"><rect x="0" y="2" width="16" height="12" rx="1" fill="#1573d8"/><path d="M2 5.500h12M2 8.500h12" stroke="#fff" stroke-width="2" stroke-dasharray="2 1"/><path d="M4 11.500h8" stroke="#fff"/></svg>
    <svg width="16" height="16"><rect x="1" y="1" width="6" height="6" rx="2" fill="#4a6ae8"/><rect x="9" y="1" width="6" height="6" rx="3" fill="#8a5ae0"/><rect x="1" y="9" width="6" height="6" rx="2" fill="#8a5ae0"/><rect x="9" y="9" width="6" height="6" rx="2" fill="#4a6ae8"/></svg>
  </aside>

  <aside class="watermark">
    <svg width="72" height="82" viewBox="0 0 72 82"><path d="M36 0l36 20v42L36 82 0 62V20z" fill="#36a9e4" opacity=".5"/><path d="M36 0l36 20-22-2-32 8L0 20z" fill="#b8e2f5" opacity=".6"/><path d="M36 20l18 10v22L36 62 18 52V30zM18 30l18 10 18-10M36 40v22" fill="none" stroke="#fff" stroke-width="2" opacity=".9"/><path d="M0 20l18 10M18 52l-2 20M54 52L36 82M54 30l4-18M18 30l22-10M54 52l18-10" stroke="#fff" stroke-width="1.500" opacity=".7"/></svg>
    <div><strong>3D世界网</strong><span>WWW.3DSJW.COM</span></div>
  </aside>
</div>
</body>
</html>
```
FILE: styles.css
```css
:root {
  --teal: #559fb8;
  --pick: #8bc2d2;
  --line: #d6d6d6;
  --ink: #222;
}
* { box-sizing: border-box; }
body {
  margin: 0;
  font: 12px/16px "Noto Sans", "Noto Sans CJK SC", sans-serif;
  color: var(--ink);
  background: #fff;
}
button, input, select { font: inherit; color: inherit; margin: 0; padding: 0; }
button { border: 0; background: none; }
button:disabled { color: #b8b8b8; }
a { color: inherit; text-decoration: none; }
svg { display: block; flex: none; }
s { width: 1px; background: #d0d0d0; flex: none; }
.defs { position: absolute; width: 0; height: 0; }
.app { position: relative; display: flex; flex-direction: column; min-height: 100vh; overflow: hidden; }
.caret { width: 6px; height: 3px; background: #222; clip-path: polygon(0 0, 100% 0, 50% 100%); flex: none; }
.caret.up { clip-path: polygon(0 100%, 100% 100%, 50% 0); }

/* title and menu */
.titlebar { display: grid; grid-template-columns: 9fr auto 10fr; height: 26px; align-items: center; }
.titlebar h1 { grid-column: 2; margin: 0; font-size: 13px; font-weight: 400; color: #000; }
.window-controls { display: flex; justify-content: flex-end; align-items: center; gap: 10px; padding-right: 7px; }
.brand { color: #009a93; font: 700 13px/16px "Noto Sans", sans-serif; margin-right: 15px; }
.menubar { display: flex; align-items: center; gap: 33px; height: 30px; padding: 0 7px 0 15px; background: #dcdcdc; font-size: 13px; white-space: nowrap; }
.menu-tools { display: flex; align-items: center; gap: 8px; margin-left: auto; }
.search { display: flex; align-items: center; width: 129px; height: 22px; margin-right: 1px; background: #fff; border: 1px solid #a5a5a5; }
.search input { width: 108px; border: 0; outline: 0; background: none; font-size: 11px; }
.tutorial { display: flex; align-items: center; gap: 3px; font-size: 11px; }
.dot { width: 14px; height: 14px; border-radius: 50%; background: #b0b0b0; margin-left: 4px; }

/* ribbon */
.ribbon { display: flex; height: 93px; padding-top: 5px; font-size: 11px; white-space: nowrap; }
.group { display: flex; flex-direction: column; height: 86px; border-right: 1px solid var(--line); flex: none; }
.group-body { display: flex; height: 71px; }
.group footer { display: flex; align-items: center; height: 15px; color: #0b6285; padding-top: 1px; }
.group footer span { flex: 1; text-align: center; }
.group footer .caret { margin-right: 8px; }
.g-output { width: 137px; }
.g-output .group-body { justify-content: flex-end; }
.g-show { width: 230px; }
.g-show .group-body { padding-left: 5px; }
.g-anim { width: 152px; }
.g-ipw { width: 141px; }
.g-ipw .group-body { padding-left: 3px; }
.g-gc { width: 150px; }
.g-feature { width: 185px; }
.g-feature .group-body { padding-left: 6px; }
.g-rest { flex: 1; border: 0; justify-content: flex-end; }
.big { display: flex; flex-direction: column; align-items: center; width: 48px; flex: none; }
.big span { margin-top: 3px; line-height: 16px; }
.big .caret { margin-top: 4px; }
.big.wide { width: 62px; }
.big.xwide { width: 72px; }
.big.more { width: 46px; }
.g-feature .big:first-child { width: 56px; }
.g-feature .more { width: 50px; }
.big > svg { height: 33px; }
.more i { display: flex; align-items: center; justify-content: center; width: 38px; height: 35px; margin-top: -1px; border: 1px solid var(--line); border-radius: 3px; }
.big:disabled span { color: #c0c0c0; }
.more span { color: #111; }
.stack { display: flex; flex-direction: column; justify-content: space-around; align-items: center; width: 24px; padding: 2px 0; }
.stack.lead { width: 42px; }
.stack.thirds { width: 40px; padding: 0; }
.g-show .big.wide { width: 60px; }
.caret.first-row { margin: 15px 8px 0 0; }
.player { display: grid; grid-template-columns: 24px 24px 42px 24px 22px; grid-template-rows: 24px 24px; row-gap: 11px; padding: 4px 0 0 12px; align-items: center; }
.player .caret { justify-self: center; }
.player svg { fill: none; stroke: #b0b0b0; }
.spin { display: flex; align-items: center; width: 33px; height: 22px; border: 1px solid #999; }
.spin input { width: 18px; border: 0; text-align: center; background: none; }
.spin span { display: grid; gap: 7px; }
.rows { flex-direction: column; gap: 12px; padding: 7px 0 0 4px; }
.row { display: flex; }
.row button { display: grid; place-items: center; width: 23px; height: 18px; }
.row s { margin: 0 2px 0 1px; }

/* selection bar */
.selbar { display: flex; align-items: center; height: 30px; border-top: 1px solid #dcdcdc; border-bottom: 1px solid #8a9399; }
.selbar > select { width: 147px; height: 23px; margin-right: 3px; border-left: 0; text-indent: -7px; }
.selbar > s { height: 22px; margin: 0 9px; }
.tools { display: flex; gap: 2px; }
.tools > div { display: flex; align-items: center; }
.tools button { display: grid; place-items: center; width: 24px; height: 22px; }
.tools .caret { margin: 0 4px; }
.tools.tight .caret { margin: 0 3px; }
.tools .on { background: #cde6eb; border: 1px solid #a9d2dc; }
.faint { color: #bbb; opacity: .6; }
.mcs { font: 700 7px "Liberation Sans", sans-serif; fill: #333; }
.caret.end { margin-left: auto; margin-right: 6px; margin-top: 10px; }

select {
  appearance: none;
  height: 25px;
  padding: 0 20px 0 4px;
  border: 1px solid #8e8e8e;
  border-radius: 0;
  background: linear-gradient(45deg, transparent 50%, #222 50%) right 9px center / 4px 4px no-repeat,
    linear-gradient(135deg, #222 50%, transparent 50%) right 5px center / 4px 4px no-repeat, #fff;
}
select:disabled {
  opacity: 1;
  color: #9a9a9a;
  border-color: #ccc;
  background-image: linear-gradient(45deg, transparent 50%, #aaa 50%), linear-gradient(135deg, #aaa 50%, transparent 50%);
}
.selbar > select:disabled { border-color: #aaa; }

/* workspace */
.workspace { position: relative; display: grid; grid-template-columns: 475px minmax(0, 1fr); flex: 1; min-height: 839px; border-bottom: 1px solid #a5a5a5; }
.navigator { display: flex; flex-direction: column; padding-bottom: 6px; border-right: 1px solid #8a9399; }
.nav-top { display: flex; justify-content: flex-end; height: 28px; padding: 10px 16px 0 0; }
.nav-frame { display: flex; flex-direction: column; flex: 1; width: 465px; border: 1px solid #d0d0d0; border-left: 0; padding-right: 1px; }
.nav-frame table { table-layout: fixed; width: 100%; border-collapse: separate; border-spacing: 0; }
.nav-frame th { height: 22px; padding: 1px 0 0 6px; background: #f0f0f0; border-right: 1px solid var(--line); border-bottom: 1px solid var(--line); font-weight: 400; text-align: left; overflow: hidden; white-space: nowrap; }
.nav-frame th.c-time { width: 33px; padding: 0; }
.clip { display: block; width: 1px; overflow: hidden; }
.c-geo { width: 50px; }
.nav-frame th.c-check { width: 52px; padding-left: 4px; border-right: 0; }
.nav-frame td { height: 20px; padding: 0; border-right: 1px solid #e6e6e6; border-bottom: 1px solid #e8e8e8; line-height: 19px; }
.nav-frame td + td { padding-left: 4px; }
.nav-frame td:last-child { border-right: 0; padding-left: 3px; }
.nav-frame tbody tr:nth-child(even) { background: #f9f9f9; }
.nav-frame tbody tr.sel { background: var(--pick); }
.empty-rows {
  flex: 1;
  background: linear-gradient(#e6e6e6, #e6e6e6) 32px 0 / 1px 100% no-repeat,
    repeating-linear-gradient(#f9f9f9 0 19px, #e8e8e8 19px 20px, #fff 20px 39px, #e8e8e8 39px 40px);
}
.hscroll { display: flex; height: 15px; background: #f0f0f0; }
.hscroll span { background: #cdcdcd; }
.nav-scroll { justify-content: space-between; margin-bottom: 1px; }
.nav-scroll span { width: 438px; background: #a6a6a6; }
.splitter { width: 465px; height: 5px; background: #dcdcdc; border: 1px solid #a0a0a0; border-left: 0; }

.view { display: flex; flex-direction: column; padding: 0 1px; }
.tabs-row { display: flex; height: 23px; margin: 0 -1px; border-bottom: 2px solid var(--teal); }
.part-tab { display: flex; align-items: center; gap: 5px; height: 21px; padding: 0 6px; background: var(--teal); color: #fff; }
.scene { flex: 1 1 0; width: 100%; min-height: 0; border: 1px solid #f79a3c; }
.axis { font: 13px "Liberation Sans", sans-serif; }
.axis.small { font-size: 9px; }

/* dialog */
.dialog { position: absolute; left: 83px; top: 0; width: 328px; height: 839px; background: #f0f0f0; border: 1px solid #d8d8d8; border-top: 0; }
.dialog > header { display: flex; align-items: center; height: 24px; padding: 0 9px 0 6px; margin: 0 -1px; background: var(--teal); color: #fff; }
.dialog h2 { flex: 1; margin: 0 0 0 7px; font-size: 14px; font-weight: 400; }
.help { width: 16px; margin-right: 8px; font-size: 16px; font-weight: 700; color: #fff; }
.dialog-body { display: flex; flex-direction: column; padding: 8px 9px 0; }
.listbox { display: grid; grid-template-columns: minmax(0, 1fr) 18px; grid-template-rows: 43px 16px; height: 62px; margin-left: 2px; border: 1px solid #999; background: #fff; }
.listbox ul { margin: 1px 0 0 1px; padding: 0; overflow: hidden; list-style: none; white-space: nowrap; height: 41px; }
.listbox li { height: 17px; line-height: 17px; }
.listbox .sel { background: var(--pick); outline: 1px dotted #222; outline-offset: -1px; }
.vscroll { grid-row: 1 / 3; grid-column: 2; display: flex; flex-direction: column; gap: 16px; align-items: center; padding-top: 5px; background: #f0f0f0; border: 1px solid #fff; }
.listbox .hscroll { grid-row: 2; grid-column: 1; margin: 0 0 0 1px; }
.listbox .hscroll span { width: 199px; margin-right: auto; }
.slider { width: 294px; margin: 3px 0 0 7px; height: 62px; }
.slider output { display: block; line-height: 17px; }
.slider input { display: block; width: 100%; height: 19px; margin: 4px 0; appearance: none; background: linear-gradient(#adadad, #adadad) center / 100% 4px no-repeat; }
.slider input::-webkit-slider-thumb { appearance: none; width: 9px; height: 19px; background: var(--teal); border: 1px solid #4a4a4a; }
.ends { display: flex; justify-content: space-between; margin: 0 -7px 0 -2px; line-height: 17px; }
.feed { margin: 6px 0 0; height: 20px; line-height: 16px; }
.tabs { display: flex; align-items: flex-end; height: 30px; padding-left: 2px; }
.tabs button { height: 28px; width: 58px; border: 1px solid #ccc; border-bottom: 0; }
.tabs button:first-child { width: 50px; border-right: 0; }
.tabs .active { width: 64px; height: 31px; margin-bottom: -1px; background: #fff; border-color: #b5b5b5; z-index: 1; }
.tabs button:last-child { border-left: 0; }
.panel { display: flex; flex-direction: column; gap: 2px; height: 453px; padding: 3px 6px 0; background: #fff; border: 1px solid #b8b8b8; }
.panel > * { flex: none; }
.field { display: flex; align-items: center; justify-content: space-between; height: 25px; }
.field.low { height: 24px; }
.field.low select { height: 24px; }
.off { color: #b0b0b0; }
.s1 { width: 51px; }
.s2 { width: 135px; }
.s3 { width: 63px; }
.s4 { width: 87px; }
.num { width: 82px; height: 23px; padding-right: 5px; text-align: right; border: 1px solid #d0d0d0; background: #fff; color: #666; font: 15px/20px "Noto Sans CJK SC", sans-serif; }
.btn { height: 29px; border: 1px solid #8e8e8e; background: #fff; }
.btn:disabled { border-color: #ccc; }
.panel hr { width: 100%; margin: 0 0 1px; border: 0; border-top: 1px solid #d0d0d0; }
.pair { display: grid; grid-auto-flow: column; grid-auto-columns: 1fr; gap: 2px; padding: 0 2px 2px 0; }
.check { display: flex; align-items: center; gap: 5px; height: 21px; }
.check input { appearance: none; display: grid; place-items: center; width: 13px; height: 13px; border: 1px solid #333; background: #fff; }
.check input:checked::after { content: ""; width: 9px; height: 4px; border: solid #333; border-width: 0 0 1px 1px; rotate: -45deg; margin-bottom: 3px; }
.speed { margin-top: 5px; height: 16px; }
.speed + .slider { margin-top: 5px; }
.transport { display: flex; gap: 2px; margin: 3px 0 0 36px; }
.transport button { display: grid; place-items: center; width: 32px; height: 32px; border: 1px solid #999; fill: #7b0000; }
.transport button:disabled { border-color: #ccc; }
.actions { display: flex; justify-content: flex-end; gap: 5px; margin-top: 12px; padding-right: 6px; }
.actions button { width: 54px; height: 25px; border: 1px solid #999; background: #dcdcdc; }
.actions .ok { background: #74b4c9; border-color: #74b4c9; color: #fff; }

/* status and taskbar */
.status { display: flex; align-items: center; justify-content: space-between; height: 22px; padding: 0 54px 0 477px; background: #fff; color: #000; font-size: 11px; font-weight: 600; }
.taskbar { display: flex; height: 40px; background: #404142; color: #fff; align-items: center; }
.task { display: flex; align-items: center; gap: 4px; height: 40px; padding-top: 2px; border-bottom: 2px solid #6fb3ea; white-space: nowrap; }
.t1 { width: 81px; margin-right: 9px; }
.t2 { width: 152px; padding-left: 6px; }
.tray { display: flex; margin-left: auto; align-items: center; }
.tray svg, .tray span { width: 16px; height: 16px; margin: 0 4px; }
.tray span { font-size: 14px; line-height: 16px; }
.taskbar time { width: 92px; text-align: center; line-height: 17px; }
.notice { display: flex; align-items: center; width: 32px; height: 40px; padding-left: 3px; border-right: 1px solid #777; margin-right: 4px; }
.notice b { width: 14px; height: 14px; margin: 12px 0 0 -9px; background: #e00b0b; font-size: 10px; line-height: 14px; text-align: center; font-weight: 400; }

.ime { position: absolute; left: 857px; bottom: 40px; display: flex; align-items: center; gap: 8px; width: 149px; height: 26px; background: #fff; border: 1px solid #b8cfe8; color: #1573d8; font-size: 15px; }
.ime svg:first-child { margin: -4px -2px 0 -6px; }
.ime b { width: 16px; }
.watermark { position: absolute; right: 22px; bottom: 13px; display: flex; align-items: center; gap: 8px; pointer-events: none; color: #fff; white-space: nowrap; }
.watermark div { display: grid; width: 181px; opacity: .5; }
.watermark strong { font-size: 41px; line-height: 44px; }
.watermark span { font: 700 16px/18px "DejaVu Sans", sans-serif; }
```
